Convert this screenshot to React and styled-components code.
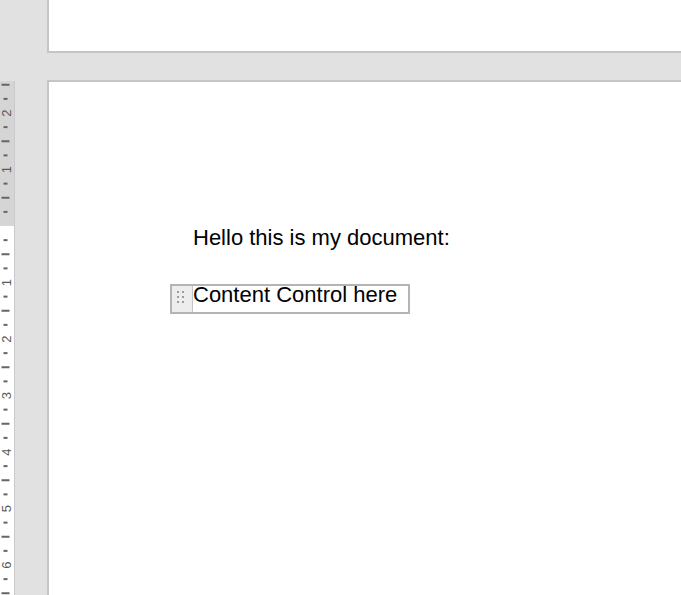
import React from 'react';
import styled, { createGlobalStyle } from 'styled-components';

const GlobalStyle = createGlobalStyle`
  html, body {
    margin: 0;
    padding: 0;
    background: #e1e1e1;
    overflow: hidden;
  }
`;

const INCH = 56.5;
const STEP = INCH / 4;
const MARGIN_TOP = 145;
const RULER_HEIGHT = 514;

const Frame = styled.div`
  display: flex;
  height: 595px;
  font-family: "Liberation Sans", Arial, sans-serif;
`;

const RulerStrip = styled.div`
  flex-shrink: 0;
  width: 14px;
  height: ${RULER_HEIGHT}px;
  margin-top: 81px;
  border-right: 1px solid #c9c9cb;
  svg {
    display: block;
  }
`;

const Workspace = styled.div`
  flex: 1;
  display: flex;
  flex-direction: column;
  gap: 27px;
  padding-left: 32px;
  min-width: 0;
`;

const PageTail = styled.div`
  height: 51px;
  background: #fff;
  border-left: 2px solid #c5c5c7;
  border-bottom: 2px solid #c5c5c7;
  flex-shrink: 0;
`;

const Page = styled.div`
  flex: 1;
  background: #fff;
  border-left: 2px solid #c5c5c7;
  border-top: 2px solid #c5c5c7;
  padding: 143px 0 0 144px;
  color: #000;
  font-size: 22px;
`;

const Paragraph = styled.p`
  margin: 0;
  line-height: 25px;
  white-space: nowrap;
`;

const ControlRow = styled.div`
  display: flex;
  margin: 34px 0 0 -23px;
`;

const ControlBox = styled.div`
  display: flex;
  border: 2px solid #b4b4b4;
`;

const Handle = styled.div`
  width: 21px;
  background: #ededed;
  border-right: 1px solid #c4c4c4;
  padding: 5px 0 0 5px;
  box-sizing: border-box;
  display: grid;
  grid-template-columns: 2px 2px;
  grid-auto-rows: 2px;
  column-gap: 3px;
  row-gap: 3px;
  align-content: start;
`;

const Dot = styled.span`
  background: #9c9c9c;
`;

const ControlText = styled.div`
  line-height: 18px;
  padding: 0 11px 8px 0;
  white-space: nowrap;
`;

function Ruler() {
  const marks = [];
  for (let k = -10; k <= 26; k++) {
    const y = MARGIN_TOP + k * STEP;
    if (k === 0 || y > RULER_HEIGHT) continue;
    const m = ((k % 4) + 4) % 4;
    if (m === 0) {
      marks.push(
        <text
          key={k}
          x={6}
          y={y}
          fontSize="13"
          fill="#595959"
          textAnchor="middle"
          dominantBaseline="central"
          fontFamily='"Liberation Sans", Arial, sans-serif'
          transform={`rotate(-90 6 ${y})`}
        >
          {Math.abs(k / 4)}
        </text>
      );
    } else if (m === 2) {
      marks.push(<rect key={k} x={1.5} y={y - 1} width={8} height={2} fill="#666" />);
    } else {
      marks.push(<rect key={k} x={3.5} y={y - 1} width={4} height={2} fill="#666" />);
    }
  }
  return (
    <RulerStrip>
      <svg width="14" height={RULER_HEIGHT}>
        <rect x="0" y="0" width="14" height={MARGIN_TOP} fill="#d5d5d5" />
        <rect x="0" y={MARGIN_TOP} width="14" height={RULER_HEIGHT - MARGIN_TOP} fill="#fff" />
        {marks}
      </svg>
    </RulerStrip>
  );
}

export default function App() {
  return (
    <>
      <GlobalStyle />
      <Frame>
        <Ruler />
        <Workspace>
          <PageTail />
          <Page>
            <Paragraph>Hello this is my document:</Paragraph>
            <ControlRow>
              <ControlBox>
                <Handle>
                  {Array.from({ length: 6 }, (_, i) => <Dot key={i} />)}
                </Handle>
                <ControlText>Content Control here</ControlText>
              </ControlBox>
            </ControlRow>
          </Page>
        </Workspace>
      </Frame>
    </>
  );
}
